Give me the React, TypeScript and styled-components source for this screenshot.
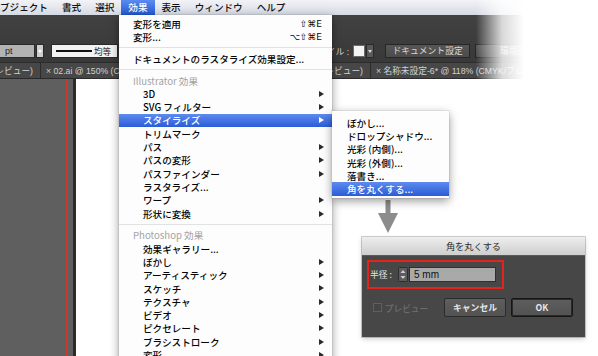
import React from 'react';
import styled, { createGlobalStyle, css } from 'styled-components';

const UI_FONT = `"Liberation Sans", "Noto Sans CJK JP", "DejaVu Sans", sans-serif`;
const MENU_FONT = `"Noto Sans CJK JP", "Liberation Sans", "DejaVu Sans", sans-serif`;

const GlobalStyle = createGlobalStyle`
  html, body {
    margin: 0;
    padding: 0;
    background: #fff;
  }
  body {
    font-family: ${UI_FONT};
  }
`;

const Screen = styled.div`
  position: relative;
  width: 598px;
  height: 356px;
  overflow: hidden;
  display: flex;
  flex-direction: column;
  background: #fff;
  font-family: ${UI_FONT};
`;

/* ---------- window chrome (menu bar, control bar, tabs) ---------- */

const Chrome = styled.div`
  position: relative;
  flex-shrink: 0;

  &::after {
    content: '';
    position: absolute;
    inset: 0;
    z-index: 1;
    pointer-events: none;
    background: linear-gradient(
      to right,
      rgba(255, 255, 255, 0) 476px,
      rgba(255, 255, 255, 0.8) 502px,
      #fff 524px
    );
  }
`;

const MenuBar = styled.div`
  height: 15px;
  display: flex;
  background: linear-gradient(#f2f3f6, #d6dae3);
`;

const MenuTitle = styled.div<{ $active?: boolean }>`
  padding: 0 7px;
  font-family: ${MENU_FONT};
  font-size: 9.6px;
  font-weight: 500;
  line-height: 15px;
  color: ${p => (p.$active ? '#fff' : '#111')};
  background: ${p => (p.$active ? 'linear-gradient(#5a8cee, #2558d6)' : 'transparent')};

  &:first-child {
    padding-left: 0;
  }
`;

const Toolbar = styled.div`
  height: 47px;
  box-sizing: border-box;
  display: flex;
  align-items: flex-end;
  padding-bottom: 4px;
  background: linear-gradient(#414141, #393939);
`;

const ToolGroup = styled.div<{ $offset?: number }>`
  display: flex;
  align-items: center;
  margin-left: ${p => p.$offset ?? 0}px;
  height: 14px;
`;

const UnitField = styled.div`
  width: 35px;
  height: 14px;
  box-sizing: border-box;
  padding-left: 5px;
  background: #b3b3b3;
  border: 1px solid #2a2a2a;
  border-left: none;
  font-size: 9px;
  line-height: 12px;
  color: #222;
`;

const DropButton = styled.div<{ $light?: boolean }>`
  position: relative;
  width: 8px;
  height: 14px;
  margin-left: 1px;
  box-sizing: border-box;
  background: ${p => (p.$light ? '#cfcfcf' : '#5a5a5a')};
  border: 1px solid #2a2a2a;

  &::after {
    content: '';
    position: absolute;
    left: 1px;
    top: 5px;
    border-left: 2.5px solid transparent;
    border-right: 2.5px solid transparent;
    border-top: 3px solid ${p => (p.$light ? '#fff' : '#ddd')};
  }
`;

const StrokeField = styled.div`
  display: flex;
  align-items: center;
  width: 67px;
  height: 14px;
  margin-left: 7px;
  box-sizing: border-box;
  padding-left: 4px;
  background: #f3f3f3;
  border: 1px solid #2a2a2a;
  font-size: 8.6px;
  color: #222;
`;

const StrokeLine = styled.span`
  width: 36px;
  height: 2px;
  margin-right: 2px;
  background: #111;
`;

const ToolLabel = styled.span`
  font-size: 8.8px;
  color: #d4d4d4;
  white-space: nowrap;
`;

const Swatch = styled.div`
  width: 12px;
  height: 12px;
  margin-left: 4px;
  box-sizing: border-box;
  background: #f4f4f4;
  border: 1px solid #6a6a6a;
`;

const ToolButton = styled.div<{ $gap?: number }>`
  width: 85px;
  height: 14px;
  margin-left: ${p => p.$gap ?? 5}px;
  box-sizing: border-box;
  background: linear-gradient(#565656, #4b4b4b);
  border: 1px solid #262626;
  font-size: 8.8px;
  line-height: 12px;
  text-align: center;
  color: #d8d8d8;
`;

const TabBar = styled.div`
  height: 17px;
  display: flex;
  box-sizing: border-box;
  background: #474747;
  border-top: 1px solid #2c2c2c;
  border-bottom: 1px solid #2a2a2a;
`;

const Tab = styled.div<{ $width?: number; $end?: boolean }>`
  display: flex;
  align-items: center;
  justify-content: ${p => (p.$end ? 'flex-end' : 'flex-start')};
  flex-shrink: 0;
  ${p => p.$width !== undefined && css`width: ${p.$width}px;`}
  box-sizing: border-box;
  padding: ${p => (p.$end ? '0 7px 0 0' : '0 0 0 5px')};
  overflow: hidden;
  white-space: nowrap;
  font-size: 8.7px;
  color: #d2d2d2;
  border-right: 1px solid #2c2c2c;
`;

/* ---------- workspace ---------- */

const Workspace = styled.div`
  flex: 1;
  display: flex;
`;

const Pasteboard = styled.div`
  width: 73px;
  background: linear-gradient(
    to right,
    #5f5f5f 66px,
    #c93a2b 66px,
    #c93a2b 68px,
    #5f5f5f 68px
  );
  border-right: 3px solid #2b2b2b;
`;

const Canvas = styled.div`
  position: relative;
  flex: 1;
  background: #fff;
`;

const FlowArrow = styled.svg`
  position: absolute;
  left: 302px;
  top: 121px;
`;

/* ---------- effect menu ---------- */

const EffectMenu = styled.div`
  position: absolute;
  left: 119px;
  top: 15px;
  z-index: 3;
  width: 213px;
  padding: 2px 0 10px;
  background: #fdfdfd;
  box-shadow: 0 3px 9px rgba(0, 0, 0, 0.4), 0 0 0 1px rgba(0, 0, 0, 0.06);
`;

const MenuRow = styled.div<{ $indent: number; $active?: boolean; $header?: boolean }>`
  position: relative;
  display: flex;
  align-items: center;
  height: 13.3px;
  padding: 0 8px 0 ${p => p.$indent}px;
  font-family: ${MENU_FONT};
  font-size: 9.6px;
  font-weight: ${p => (p.$header ? 400 : 500)};
  white-space: nowrap;
  color: ${p => (p.$active ? '#fff' : p.$header ? '#a3a3a3' : '#050505')};
  background: ${p => (p.$active ? 'linear-gradient(#5d8bee, #2b5cd8)' : 'transparent')};
`;

const RowLabel = styled.span`
  flex: 1;
`;

const Shortcut = styled.span`
  margin-right: 2px;
  font-family: "DejaVu Sans", "Liberation Sans", sans-serif;
  font-size: 9px;
`;

const SubArrow = styled.span<{ $active?: boolean }>`
  width: 0;
  height: 0;
  border-top: 3.5px solid transparent;
  border-bottom: 3.5px solid transparent;
  border-left: 5px solid ${p => (p.$active ? '#fff' : '#2a2a2a')};
`;

const Separator = styled.div`
  height: 8.5px;
  display: flex;
  align-items: center;

  &::before {
    content: '';
    flex: 1;
    height: 1px;
    background: #e2e2e2;
  }
`;

const Submenu = styled.div`
  position: absolute;
  left: 100%;
  top: -2.8px;
  width: 117px;
  padding: 5px 0 2px;
  background: #fdfdfd;
  box-shadow: 0 3px 9px rgba(0, 0, 0, 0.4), 0 0 0 1px rgba(0, 0, 0, 0.06);
`;

/* ---------- round corners dialog ---------- */

const Dialog = styled.div`
  position: absolute;
  left: 286px;
  top: 158px;
  width: 223px;
  box-shadow: 0 0 0 1px rgba(0, 0, 0, 0.18), 0 2px 5px rgba(0, 0, 0, 0.2);
`;

const DialogTitle = styled.div`
  height: 19px;
  box-sizing: border-box;
  background: linear-gradient(#eeeeee, #cecece);
  border-bottom: 1px solid #5a5a5a;
  font-family: ${MENU_FONT};
  font-size: 9.2px;
  line-height: 18px;
  text-align: center;
  color: #2b2b2b;
`;

const DialogBody = styled.div`
  height: 81px;
  box-sizing: border-box;
  padding: 4px 12px 0 5px;
  background: #474747;
`;

const FieldHighlight = styled.div`
  display: flex;
  align-items: center;
  width: 137px;
  height: 29px;
  box-sizing: border-box;
  padding-left: 1px;
  border: 2px solid #e4241b;
`;

const FieldLabel = styled.span`
  width: 28px;
  font-family: ${MENU_FONT};
  font-size: 8.8px;
  color: #e4e4e4;
  white-space: nowrap;
`;

const Stepper = styled.svg`
  display: block;
  flex-shrink: 0;
`;

const ValueInput = styled.div`
  width: 87px;
  height: 15px;
  margin-left: 1px;
  box-sizing: border-box;
  padding-left: 4px;
  background: #a9a9a9;
  border: 1px solid #2f2f2f;
  font-size: 10px;
  line-height: 13px;
  color: #111;
`;

const ActionRow = styled.div`
  display: flex;
  align-items: center;
  height: 19px;
  margin-top: 9px;
  padding-left: 6px;
`;

const CheckBox = styled.span`
  flex-shrink: 0;
  width: 9px;
  height: 9px;
  box-sizing: border-box;
  background: #454545;
  border: 1px solid #5f5f5f;
`;

const CheckLabel = styled.span`
  margin-left: 3px;
  font-family: ${MENU_FONT};
  font-size: 8.6px;
  font-weight: 500;
  white-space: nowrap;
  color: #6e6e6e;
`;

const DialogButton = styled.div<{ $primary?: boolean; $gap?: number }>`
  flex-shrink: 0;
  width: 62px;
  height: 19px;
  margin-left: ${p => (p.$gap === undefined ? 'auto' : `${p.$gap}px`)};
  box-sizing: border-box;
  background: linear-gradient(#5e5e5e, #525252);
  border: 1px solid ${p => (p.$primary ? '#161616' : '#2b2b2b')};
  box-shadow: ${p => (p.$primary ? 'inset 0 0 0 1px #2a2a2a' : 'none')};
  border-radius: 2px;
  font-family: ${MENU_FONT};
  font-size: 8.8px;
  font-weight: bold;
  line-height: 17px;
  text-align: center;
  color: #e6e6e6;
`;

type MenuEntry =
  | { kind: 'item'; label: string; indent: number; shortcut?: string; sub?: boolean; active?: boolean }
  | { kind: 'header'; label: string }
  | { kind: 'sep' };

const menuEntries: MenuEntry[] = [
  { kind: 'item', label: '変形を適用', indent: 14, shortcut: '⇧⌘E' },
  { kind: 'item', label: '変形...', indent: 14, shortcut: '⌥⇧⌘E' },
  { kind: 'sep' },
  { kind: 'item', label: 'ドキュメントのラスタライズ効果設定...', indent: 14 },
  { kind: 'sep' },
  { kind: 'header', label: 'Illustrator 効果' },
  { kind: 'item', label: '3D', indent: 24, sub: true },
  { kind: 'item', label: 'SVG フィルター', indent: 24, sub: true },
  { kind: 'item', label: 'スタイライズ', indent: 24, sub: true, active: true },
  { kind: 'item', label: 'トリムマーク', indent: 24 },
  { kind: 'item', label: 'パス', indent: 24, sub: true },
  { kind: 'item', label: 'パスの変形', indent: 24, sub: true },
  { kind: 'item', label: 'パスファインダー', indent: 24, sub: true },
  { kind: 'item', label: 'ラスタライズ...', indent: 24 },
  { kind: 'item', label: 'ワープ', indent: 24, sub: true },
  { kind: 'item', label: '形状に変換', indent: 24, sub: true },
  { kind: 'sep' },
  { kind: 'header', label: 'Photoshop 効果' },
  { kind: 'item', label: '効果ギャラリー...', indent: 24 },
  { kind: 'item', label: 'ぼかし', indent: 24, sub: true },
  { kind: 'item', label: 'アーティスティック', indent: 24, sub: true },
  { kind: 'item', label: 'スケッチ', indent: 24, sub: true },
  { kind: 'item', label: 'テクスチャ', indent: 24, sub: true },
  { kind: 'item', label: 'ビデオ', indent: 24, sub: true },
  { kind: 'item', label: 'ピクセレート', indent: 24, sub: true },
  { kind: 'item', label: 'ブラシストローク', indent: 24, sub: true },
  { kind: 'item', label: '変形', indent: 24, sub: true },
];

const stylizeItems = [
  'ぼかし...',
  'ドロップシャドウ...',
  '光彩 (内側)...',
  '光彩 (外側)...',
  '落書き...',
  '角を丸くする...',
];

const menuTitles = ['ブジェクト', '書式', '選択', '効果', '表示', 'ウィンドウ', 'ヘルプ'];

const App: React.FC = () => {
  return (
    <>
      <GlobalStyle />
      <Screen>
        <Chrome>
          <MenuBar>
            {menuTitles.map(t => (
              <MenuTitle key={t} $active={t === '効果'}>
                {t}
              </MenuTitle>
            ))}
          </MenuBar>

          <Toolbar>
            <ToolGroup>
              <UnitField>pt</UnitField>
              <DropButton $light />
              <StrokeField>
                <StrokeLine />
                均等
              </StrokeField>
              <DropButton />
            </ToolGroup>
            <ToolGroup $offset={182}>
              <ToolLabel>スタイル :</ToolLabel>
              <Swatch />
              <DropButton />
              <ToolButton $gap={11}>ドキュメント設定</ToolButton>
              <ToolButton>環境設定</ToolButton>
            </ToolGroup>
          </Toolbar>

          <TabBar>
            <Tab $width={41} $end>
              × 01.ai @ 150% (CMYK/プレビュー)
            </Tab>
            <Tab $width={165}>× 02.ai @ 150% (CMYK/プレビュー)</Tab>
            <Tab $width={165} $end>
              × 03.ai @ 150% (CMYK/プレビュー)
            </Tab>
            <Tab>× 名称未設定-6* @ 118% (CMYK/プレビュー)</Tab>
          </TabBar>
        </Chrome>

        <Workspace>
          <Pasteboard />
          <Canvas>
            <FlowArrow width="20" height="34" viewBox="0 0 20 34">
              <rect x="7.5" y="0" width="5" height="14" fill="#8c8c8c" />
              <polygon points="0,13 20,13 10,33" fill="#8c8c8c" />
            </FlowArrow>

            <Dialog>
              <DialogTitle>角を丸くする</DialogTitle>
              <DialogBody>
                <FieldHighlight>
                  <FieldLabel>半径 :</FieldLabel>
                  <Stepper width="10" height="15" viewBox="0 0 10 15">
                    <rect x="0.5" y="0.5" width="9" height="14" rx="1" fill="#5c5c5c" stroke="#2e2e2e" />
                    <polygon points="2.5,6 7.5,6 5,3" fill="#d0d0d0" />
                    <polygon points="2.5,9 7.5,9 5,12" fill="#d0d0d0" />
                  </Stepper>
                  <ValueInput>5 mm</ValueInput>
                </FieldHighlight>
                <ActionRow>
                  <CheckBox />
                  <CheckLabel>プレビュー</CheckLabel>
                  <DialogButton>キャンセル</DialogButton>
                  <DialogButton $primary $gap={5}>
                    OK
                  </DialogButton>
                </ActionRow>
              </DialogBody>
            </Dialog>
          </Canvas>
        </Workspace>

        <EffectMenu>
          {menuEntries.map((e, i) => {
            if (e.kind === 'sep') return <Separator key={i} />;
            if (e.kind === 'header')
              return (
                <MenuRow key={i} $indent={14} $header>
                  <RowLabel>{e.label}</RowLabel>
                </MenuRow>
              );
            return (
              <MenuRow key={i} $indent={e.indent} $active={e.active}>
                <RowLabel>{e.label}</RowLabel>
                {e.shortcut && <Shortcut>{e.shortcut}</Shortcut>}
                {e.sub && <SubArrow $active={e.active} />}
                {e.active && (
                  <Submenu>
                    {stylizeItems.map((s, j) => (
                      <MenuRow key={s} $indent={15} $active={j === stylizeItems.length - 1}>
                        <RowLabel>{s}</RowLabel>
                      </MenuRow>
                    ))}
                  </Submenu>
                )}
              </MenuRow>
            );
          })}
        </EffectMenu>
      </Screen>
    </>
  );
};

export default App;
